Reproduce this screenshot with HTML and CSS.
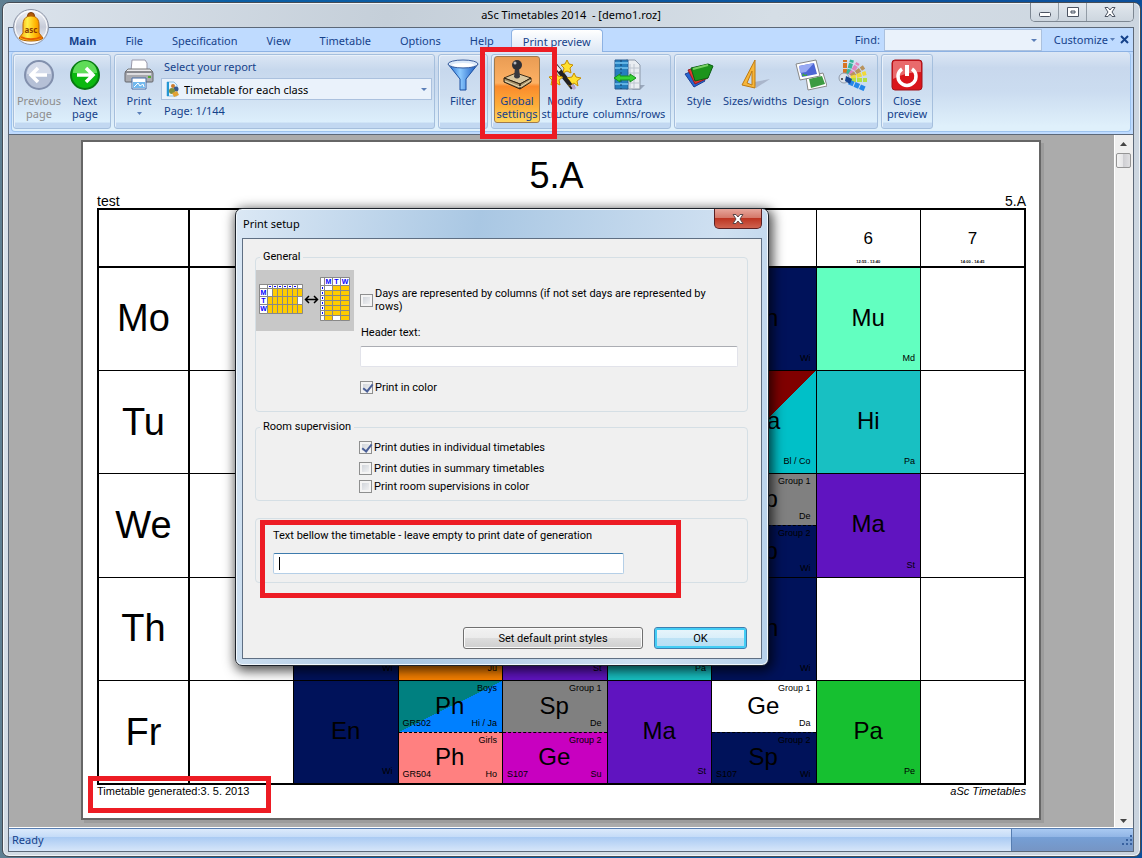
FILE: index.html
```html
<!DOCTYPE html>
<html lang="en">
<head>
    <meta charset="UTF-8">
    <meta name="viewport" content="width=device-width, initial-scale=1.0">
    <title>aSc Timetables 2014 - [demo1.roz]</title>
    <link rel="stylesheet" href="styles.css">
</head>
<body>

<div class="window">
    <header class="titlebar">
        <h1>aSc Timetables 2014&nbsp; - [demo1.roz]</h1>
        <div class="window-buttons">
            <button aria-label="Minimize"><svg width="14" height="12"><rect x="1.500" y="6.500" width="11" height="4" rx="1" fill="#fff" stroke="#4c5462"/></svg></button>
            <button aria-label="Maximize"><svg width="14" height="12"><path d="M1.500 1.500h11v9h-11zM5 5v2h4V5z" fill="#fff" stroke="#4c5462" fill-rule="evenodd"/></svg></button>
            <button class="wide" aria-label="Close"><svg width="14" height="12"><path d="M2 1.500h3l2 2.500 2-2.500h3L9 6l3 4.500H9L7 8l-2 2.500H2L5 6z" fill="#fff" stroke="#4c5462"/></svg></button>
        </div>
    </header>

    <button class="orb" aria-label="Application menu">
        <svg width="38" height="38" viewBox="0 0 38 38">
            <defs>
                <linearGradient id="orbFill" x2="0" y2="1"><stop offset="0" stop-color="#f4f6fa"/><stop offset=".5" stop-color="#c6cbd8"/><stop offset="1" stop-color="#f8f9fc"/></linearGradient>
                <linearGradient id="bell"><stop offset="0" stop-color="#f79a00"/><stop offset=".35" stop-color="#fff04a"/><stop offset=".7" stop-color="#ffb300"/><stop offset="1" stop-color="#e86b00"/></linearGradient>
            </defs>
            <circle cx="19" cy="19" r="17.500" fill="url(#orbFill)" stroke="#8b93a5"/>
            <circle cx="19" cy="19" r="16" fill="none" stroke="#fff"/>
            <circle cx="19" cy="8" r="3.500" fill="#b45a08" stroke="#7b3a04"/>
            <path d="M19 8c-6 0-8 4-8 9v8l-4 5c2 4 22 4 24 0l-4-5v-8c0-5-2-9-8-9z" fill="url(#bell)" stroke="#b86300"/>
            <path d="M9 29c5 3 15 3 20 0" fill="none" stroke="#e45d00" stroke-width="2"/>
            <text x="19" y="25" class="bell-text">asc</text>
        </svg>
    </button>

    <div class="client">
        <nav class="tabs">
            <a href="#" class="main">Main</a>
            <a href="#">File</a>
            <a href="#">Specification</a>
            <a href="#">View</a>
            <a href="#">Timetable</a>
            <a href="#">Options</a>
            <a href="#">Help</a>
            <a href="#" class="active">Print preview</a>
            <div class="find">
                <label for="find">Find:</label>
                <span class="combo"><select id="find"><option></option></select></span>
                <button class="customize">Customize <svg width="5" height="4"><path d="M0 0h5L2.500 3z" fill="#5b7fb8"/></svg></button>
                <button class="close-doc" aria-label="Close"><svg width="9" height="9"><path d="M1 1l7 7M8 1L1 8" stroke="#15428b" stroke-width="2"/></svg></button>
            </div>
        </nav>

        <div class="ribbon">
            <div class="group">
                <button class="tool" disabled>
                    <svg width="32" height="32" viewBox="0 0 32 32"><circle cx="16" cy="16" r="14" fill="#b5c0d6" stroke="#8290ad" stroke-width="2"/><path d="M4 15a12 12 0 0 1 24 0z" fill="#d4dbea"/><path d="M24 16H9M15 9l-7 7 7 7" fill="none" stroke="#fff" stroke-width="3.500"/></svg>
                    <span>Previous<br>page</span>
                </button>
                <button class="tool">
                    <svg width="32" height="32" viewBox="0 0 32 32"><circle cx="16" cy="16" r="14" fill="#0bb80f" stroke="#087a12" stroke-width="2"/><path d="M4 14a12 12 0 0 1 24 0z" fill="#5fdc58"/><path d="M8 16h15M17 9l7 7-7 7" fill="none" stroke="#fff" stroke-width="3.500"/></svg>
                    <span>Next<br>page</span>
                </button>
            </div>

            <div class="group report-group">
                <button class="tool narrow">
                    <svg width="32" height="32" viewBox="0 0 32 32"><path d="M9 1h13l2 3v8H8z" fill="#fff" stroke="#99a"/><path d="M5 10h22l3 3H2z" fill="#e9e9ec" stroke="#777"/><rect x="2" y="13" width="28" height="10" rx="1" fill="#aaabb0" stroke="#65666c"/><path d="M4 15h24" stroke="#dddde0" stroke-width="2"/><rect x="25" y="17" width="3" height="2" fill="#5a3"/><path d="M9 19h14v11H9z" fill="#fff" stroke="#456da8"/><path d="M10 23h12v6H10z" fill="#72b9ee"/><path d="M11 28l4-4 2 3 3-2 1 3" fill="none" stroke="#fff"/></svg>
                    <span>Print</span>
                    <svg width="5" height="4"><path d="M0 0h5L2.500 3z" fill="#5b7fb8"/></svg>
                </button>
                <div class="report">
                    <label for="report">Select your report</label>
                    <span class="combo">
                        <svg width="14" height="16" viewBox="0 0 14 16"><path d="M1 1h7l3 3v11H1z" fill="#e8f4fc" stroke="#8ac0e4"/><path d="M2 1v14" stroke="#2497d4" stroke-width="2"/><circle cx="7" cy="5" r="2" fill="#cc7b2b"/><circle cx="10" cy="8" r="2.500" fill="#38598e"/><circle cx="6" cy="10" r="3" fill="#7c8f3e"/><path d="M6 12l5-2 2 4-5 2z" fill="#e2a233"/></svg>
                        <select id="report"><option>Timetable for each class</option></select>
                    </span>
                    <span>Page: 1/144</span>
                </div>
            </div>

            <div class="group">
                <button class="tool narrow">
                    <svg width="32" height="32" viewBox="0 0 32 32"><defs><linearGradient id="funnel"><stop offset="0" stop-color="#1b66cf"/><stop offset=".4" stop-color="#8ccaff"/><stop offset="1" stop-color="#1152bd"/></linearGradient></defs><path d="M1 5l12 15v11h6V20L31 5z" fill="url(#funnel)" stroke="#1a4fa0"/><ellipse cx="16" cy="5" rx="15" ry="4" fill="#dceafa" stroke="#3a5d9c"/><ellipse cx="16" cy="6" rx="11" ry="2" fill="#fff"/></svg>
                    <span>Filter</span>
                </button>
            </div>

            <div class="group">
                <div class="marked">
                    <button class="tool selected">
                        <svg width="32" height="32" viewBox="0 0 32 32"><path d="M3 19l12-5 15 5-11 6z" fill="#d9c7a0" stroke="#3a2c18"/><path d="M3 19v4l16 7v-5zM30 19v4l-11 7v-5z" fill="#a9946a" stroke="#2c2112"/><path d="M4 22l15 6 11-7" fill="none" stroke="#e9dbb8"/><path d="M14 9h4l1 9c-2 2-4 2-6 0z" fill="#39393f"/><circle cx="16" cy="6" r="5" fill="#2f3036"/><circle cx="14" cy="4" r="1.500" fill="#b7b7bd"/></svg>
                        <span>Global<br>settings</span>
                    </button>
                </div>
                <button class="tool modify">
                    <svg width="32" height="32" viewBox="0 0 32 32"><path d="M5 5l19 24" stroke="#222" stroke-width="5"/><path d="M5 5l6 7" stroke="#eee" stroke-width="3"/><path d="M22 25l4 5" stroke="#b9a5d4" stroke-width="3"/><g fill="#ffe02e" stroke="#c58d00"><path d="M18 1l2 4 4 1-3 3 1 5-4-2-4 2 1-5-3-3 4-1z"/><path d="M7 13l2 4 5 1-4 3 1 5-4-2-5 2 1-5-3-3 5-1z"/><path d="M25 14l2 4 5 1-4 3 1 5-4-3-5 3 1-5-4-3 6-1z"/></g><path d="M11 12l11 14" stroke="#222" stroke-width="3"/></svg>
                    <span>Modify<br>structure</span>
                </button>
                <button class="tool extra">
                    <svg width="32" height="32" viewBox="0 0 32 32"><path d="M22 26h10l-5 5h-8z" fill="#9aa8bc"/><path d="M13 1h9l5 5v24H13z" fill="#e9edf2" stroke="#8c98a8"/><path d="M17 5v24M21 5v24M13 9h13M13 14h13M13 24h13" stroke="#bcc4cf"/><path d="M2 1h13v29H2z" fill="#257fbe" stroke="#285d91"/><path d="M2 4h13M2 9h13M2 25h13" stroke="#63b3e3" stroke-width="2"/><path d="M8 1v29" stroke="#123f68" stroke-dasharray="2 2"/><path d="M1 19l6-4v2h10v-2l6 4-6 4v-2H7v2z" fill="#38d234" stroke="#148f1d"/></svg>
                    <span>Extra<br>columns/rows</span>
                </button>
            </div>

            <div class="group">
                <button class="tool narrow">
                    <svg width="32" height="32" viewBox="0 0 32 32"><path d="M2 15l13-5 7 12-11 6z" fill="#2465d2" stroke="#1c3f94"/><path d="M5 11l13-4 7 12-13 6z" fill="#e53532" stroke="#971c21"/><path d="M8 9l17-4 5 2-5 12-13 3z" fill="#1c941b" stroke="#0b5e15"/><path d="M10 10l15-4" stroke="#75cf62" stroke-width="2"/></svg>
                    <span>Style</span>
                </button>
                <button class="tool sizes">
                    <svg width="32" height="32" viewBox="0 0 32 32"><path d="M15 23l16-3-14 9z" fill="#aab6cb"/><path d="M16 1v28L3 26zM13 12L8 24l5 2z" fill="#f7b63a" stroke="#bd7a12" fill-rule="evenodd"/></svg>
                    <span>Sizes/widths</span>
                </button>
                <button class="tool narrow">
                    <svg width="32" height="32" viewBox="0 0 32 32"><path d="M11 18l17-4 4 13-19 4z" fill="#fff" stroke="#888"/><path d="M14 20l13-3 3 8-14 4z" fill="#3c9b42"/><path d="M1 5l20-4 4 16-20 4z" fill="#fff" stroke="#888"/><path d="M4 7l15-3 3 11-15 3z" fill="#4d66d5"/><path d="M4 7l15-3-8 9-6 1z" fill="#98a9f3"/><path d="M7 17l1-3 2 2 2-1v2z" fill="#3da544"/></svg>
                    <span>Design</span>
                </button>
                <button class="tool colors">
                    <svg width="32" height="32" viewBox="0 0 32 32"><g transform="translate(8 20)" fill="none" stroke-width="4" stroke-dasharray="5 1"><path d="M-1-5V-19" stroke="#d77425"/><path d="M2-5l4-14" stroke="#35b59c"/><path d="M4-4l8-12" stroke="#df85bd"/><path d="M5-3l13-9" stroke="#b8935d"/><path d="M5-1l15-5" stroke="#f2d938"/><path d="M5 1h16" stroke="#b4df45"/><path d="M3 3l16 7" stroke="#2487e8" stroke-width="5"/></g><circle cx="6" cy="19" r="5" fill="#dce3ec" stroke="#919cad"/><circle cx="4" cy="20" r="1" fill="#333"/><path d="M8 17l6 3-2 5-5-3z" fill="#164593"/></svg>
                    <span>Colors</span>
                </button>
            </div>

            <div class="group">
                <button class="tool">
                    <svg width="32" height="32" viewBox="0 0 32 32"><rect x="1" y="1" width="30" height="30" rx="3" fill="#d9151b" stroke="#a11218"/><path d="M2 4q0-2 2-2h24q2 0 2 2v9q-15 0-28 7z" fill="#e96a6c"/><path d="M11 10a9 9 0 1 0 10 0" fill="none" stroke="#fff" stroke-width="3.500"/><path d="M16 6v11" stroke="#fff" stroke-width="4"/></svg>
                    <span>Close<br>preview</span>
                </button>
            </div>
        </div>

        <main class="workspace">
            <div class="preview">
                <section class="page">
                    <div class="page-head">
                        <span>test</span>
                        <h2>5.A</h2>
                        <span>5.A</span>
                    </div>
                    <table class="timetable">
                        <thead>
                            <tr>
                                <td></td>
                                <th></th>
                                <th></th>
                                <th></th>
                                <th></th>
                                <th></th>
                                <th></th>
                                <th>6<small>12:55 - 13:40</small></th>
                                <th>7<small>14:00 - 14:45</small></th>
                            </tr>
                        </thead>
                        <tbody>
                            <tr>
                                <th>Mo</th>
                                <td></td><td></td><td></td><td></td><td></td>
                                <td><div class="lesson navy"><b>En</b><i>Wi</i></div></td>
                                <td><div class="lesson mint"><b>Mu</b><i>Md</i></div></td>
                                <td></td>
                            </tr>
                            <tr>
                                <th>Tu</th>
                                <td></td><td></td><td></td><td></td><td></td>
                                <td><div class="lesson red-cyan"><b>Ma</b><i>Bl / Co</i></div></td>
                                <td><div class="lesson teal"><b>Hi</b><i>Pa</i></div></td>
                                <td></td>
                            </tr>
                            <tr>
                                <th>We</th>
                                <td></td><td></td><td></td><td></td><td></td>
                                <td>
                                    <div class="split">
                                        <div class="lesson gray"><em>Group 1</em><b>Sp</b><i>De</i></div>
                                        <div class="lesson navy"><em>Group 2</em><b>Sp</b><i>Wi</i></div>
                                    </div>
                                </td>
                                <td><div class="lesson purple"><b>Ma</b><i>St</i></div></td>
                                <td></td>
                            </tr>
                            <tr>
                                <th>Th</th>
                                <td></td>
                                <td><div class="lesson navy"><i>Wi</i></div></td>
                                <td><div class="lesson orange"><i>Ju</i></div></td>
                                <td><div class="lesson purple"><i>St</i></div></td>
                                <td><div class="lesson teal"><i>Pa</i></div></td>
                                <td><div class="lesson navy"><b>En</b><i>Wi</i></div></td>
                                <td></td>
                                <td></td>
                            </tr>
                            <tr>
                                <th>Fr</th>
                                <td></td>
                                <td><div class="lesson navy"><b>En</b><i>Wi</i></div></td>
                                <td>
                                    <div class="split">
                                        <div class="lesson teal-blue"><em>Boys</em><b>Ph</b><u>GR502</u><i>Hi / Ja</i></div>
                                        <div class="lesson salmon"><em>Girls</em><b>Ph</b><u>GR504</u><i>Ho</i></div>
                                    </div>
                                </td>
                                <td>
                                    <div class="split">
                                        <div class="lesson gray"><em>Group 1</em><b>Sp</b><i>De</i></div>
                                        <div class="lesson magenta"><em>Group 2</em><b>Ge</b><u>S107</u><i>Su</i></div>
                                    </div>
                                </td>
                                <td><div class="lesson purple"><b>Ma</b><i>St</i></div></td>
                                <td>
                                    <div class="split">
                                        <div class="lesson"><em>Group 1</em><b>Ge</b><i>Da</i></div>
                                        <div class="lesson navy"><em>Group 2</em><b>Sp</b><u>S107</u><i>Wi</i></div>
                                    </div>
                                </td>
                                <td><div class="lesson green"><b>Pa</b><i>Pe</i></div></td>
                                <td></td>
                            </tr>
                        </tbody>
                    </table>
                    <div class="page-foot">
                        <span class="generated">Timetable generated:3. 5. 2013</span>
                        <cite>aSc Timetables</cite>
                    </div>
                </section>
            </div>
            <div class="scrollbar">
                <svg width="7" height="4"><path d="M0 4l3.500-4L7 4z" fill="#444"/></svg>
                <div class="thumb"></div>
                <svg width="7" height="4"><path d="M0 0h7L3.500 4z" fill="#444"/></svg>
            </div>
        </main>

        <footer class="status">
            <span>Ready</span>
            <div class="grip"><svg width="11" height="11"><path d="M8 0h2v2H8zM4 4h2v2H4zM8 4h2v2H8zM0 8h2v2H0zM4 8h2v2H4zM8 8h2v2H8z" fill="#38619f"/></svg></div>
        </footer>
    </div>
</div>

<!-- Print setup dialog -->
<form class="dialog" role="dialog" aria-labelledby="dialogTitle">
    <div class="dialog-title">
        <h3 id="dialogTitle">Print setup</h3>
        <button type="button" aria-label="Close"><svg width="14" height="12"><path d="M2 1.500h3l2 2.500 2-2.500h3L9 6l3 4.500H9L7 8l-2 2.500H2L5 6z" fill="#fff" stroke="#5c4648"/></svg></button>
    </div>
    <div class="dialog-body">
        <fieldset class="general">
            <legend>General</legend>
            <svg class="layout-pic" width="98" height="61" viewBox="0 0 98 61">
                <rect width="98" height="61" fill="#c8c8c8"/>
                <g stroke="#888" stroke-width="1">
                    <path d="M3.500 14.500h43v29h-43z" fill="#fc0"/>
                    <path d="M3.500 14.500h43v4h-43zM3.500 18.500h8v25h-8zM11.500 18.500h5v8h-5zM41.500 26.500h5v8h-5z" fill="#fff"/>
                    <path d="M11.500 14v29M16.500 14v29M21.500 14v29M26.500 14v29M31.500 14v29M36.500 14v29M41.500 14v29M3 26.500h43M3 34.500h43" fill="none"/>
                    <path d="M64.500 7.500h29v43h-29z" fill="#fc0"/>
                    <path d="M64.500 7.500h29v8h-29zM64.500 15.500h4v35h-4zM68.500 15.500h8v5h-8zM76.500 45.500h8v5h-8z" fill="#fff"/>
                    <path d="M68.500 7v43M76.500 7v43M84.500 7v43M64 20.500h29M64 25.500h29M64 30.500h29M64 35.500h29M64 40.500h29M64 45.500h29" fill="none"/>
                </g>
                <path d="M13 16.500h2M18 16.500h2M23 16.500h2M28 16.500h2M33 16.500h2M38 16.500h2M66.500 17v2M66.500 22v2M66.500 27v2M66.500 32v2M66.500 37v2M66.500 42v2" stroke="#00f" stroke-width="1"/>
                <path d="M50 29.500h11M53 26l-3.500 3.500L53 33M58 26l3.500 3.500L58 33" fill="none" stroke="#000" stroke-width="1.500"/>
                <g class="pic-text"><text x="7.500" y="25">M</text><text x="7.500" y="33">T</text><text x="7.500" y="41">W</text><text x="72.500" y="14">M</text><text x="80.500" y="14">T</text><text x="89" y="14">W</text></g>
            </svg>
            <div class="general-fields">
                <label class="check"><input type="checkbox"><span>Days are represented by columns (if not set days are represented by rows)</span></label>
                <label class="field-label" for="headerText">Header text:</label>
                <input class="text" type="text" id="headerText">
                <label class="check"><input type="checkbox" checked><span>Print in color</span></label>
            </div>
        </fieldset>

        <fieldset class="rooms">
            <legend>Room supervision</legend>
            <label class="check first"><input type="checkbox" checked><span>Print duties in individual timetables</span></label>
            <label class="check"><input type="checkbox"><span>Print duties in summary timetables</span></label>
            <label class="check"><input type="checkbox"><span>Print room supervisions in color</span></label>
        </fieldset>

        <div class="below">
            <label for="belowText">Text bellow the timetable - leave empty to print date of generation</label>
            <div class="below-input">
                <input class="text focused" type="text" id="belowText">
                <span class="caret"></span>
            </div>
        </div>

        <div class="dialog-buttons">
            <button type="button">Set default print styles</button>
            <button type="button" class="ok">OK</button>
        </div>
    </div>
</form>

</body>
</html>
```
FILE: styles.css
```css
* {
    box-sizing: border-box;
}

body {
    margin: 0;
    height: 100vh;
    padding: 2px 1px 1px 2px;
    background: linear-gradient(90deg, #5f7f92, #0b5fa5 20%, #0b4f9b);
    font-family: "Noto Sans", "Open Sans", sans-serif;
    font-size: 11px;
    color: #15428b;
    position: relative;
    overflow: hidden;
}

h1, h2, h3 {
    margin: 0;
    font-weight: normal;
}

button, select, input {
    font: inherit;
    color: inherit;
    margin: 0;
}

svg {
    display: block;
    flex: none;
}

.window {
    position: relative;
    height: 100%;
    display: flex;
    flex-direction: column;
    border: 1px solid #454c55;
    border-radius: 7px;
    padding: 0 6px 4px 5px;
    background: linear-gradient(100deg, #dbe3ec, #c5cfd9 30%, #d5dee6 60%, #c9d3de);
    box-shadow: inset 0 0 0 1px #f1f5f8;
}

/* Title bar */
.titlebar {
    display: flex;
    align-items: flex-start;
    height: 24px;
}

.titlebar h1 {
    flex: 1;
    padding-left: 104px;
    text-align: center;
    font-size: 11px;
    line-height: 24px;
    color: #000;
}

.window-buttons {
    display: flex;
    border: 1px solid #7d8792;
    border-top: 0;
    border-radius: 0 0 5px 5px;
}

.window-buttons button {
    width: 28px;
    height: 18px;
    padding: 0;
    border: 0;
    border-right: 1px solid #929ca6;
    background: linear-gradient(#e2e8ee, #cdd6df);
    display: flex;
    align-items: center;
    justify-content: center;
}

.window-buttons .wide {
    width: 46px;
    border-right: 0;
}

.window-buttons button:last-child,
.window-buttons button:first-child {
    border-radius: 0 0 4px 4px;
}

.orb {
    position: absolute;
    left: 9px;
    top: 5px;
    padding: 0;
    border: 0;
    background: none;
}

.bell-text {
    font-size: 8px;
    font-weight: bold;
    text-anchor: middle;
    fill: #8d3a00;
}

.client {
    flex: 1;
    min-height: 0;
    display: flex;
    flex-direction: column;
    border: 1px solid #5c6878;
    background: #bfdbff;
}

/* Tabs */
.tabs {
    display: flex;
    gap: 1px;
    height: 24px;
    padding-left: 46px;
    border-bottom: 1px solid #8db2e3;
}

.tabs a {
    padding: 0 14px;
    line-height: 26px;
    color: #15428b;
    text-decoration: none;
}

.tabs .main {
    font-weight: bold;
}

.tabs .active {
    margin: 1px 0 -1px 2px;
    padding: 0 11px;
    line-height: 23px;
    border: 1px solid #8db2e3;
    border-bottom: 0;
    border-radius: 4px 4px 0 0;
    background: linear-gradient(#fff, #dce7f5);
}

.find {
    margin-left: auto;
    display: flex;
    align-items: center;
    line-height: 22px;
}

.combo {
    position: relative;
    display: flex;
    align-items: center;
    height: 22px;
    border: 1px solid #abc1de;
    background: #eaf2fb;
}

.combo::after {
    content: "";
    position: absolute;
    right: 4px;
    top: 9px;
    border: 3px solid transparent;
    border-top-color: #5b7fb8;
    border-bottom: 0;
}

.combo select {
    flex: 1;
    height: 20px;
    padding: 0 4px;
    border: 0;
    appearance: none;
    background: none;
    color: #000;
}

.find .combo {
    width: 158px;
    margin: 0 12px 0 4px;
}

.customize,
.close-doc {
    display: flex;
    align-items: center;
    gap: 2px;
    padding: 0;
    border: 0;
    background: none;
}

.close-doc {
    margin: 0 4px 0 5px;
}

/* Ribbon */
.ribbon {
    display: flex;
    gap: 3px;
    height: 80px;
    margin: 0 2px 2px;
    padding: 2px 1px;
    border: 1px solid #9dc3ee;
    border-top: 0;
    border-radius: 4px;
    background: linear-gradient(#dce7f5, #c8d8ed 20%, #cbdcf0 50%, #dff0fb 94%);
}

.group {
    display: flex;
    padding: 1px 2px;
    border: 1px solid #a5bfdd;
    border-radius: 3px;
    background: linear-gradient(#dbe6f4, #c7d8ed 20%, #cfdff1 55%, #dceffc 92%, #c2d8f1 93%, #c2d8f1);
    box-shadow: inset 1px 1px 0 #e9f1fa;
}

.tool {
    display: flex;
    flex-direction: column;
    align-items: center;
    width: 46px;
    height: 69px;
    padding: 3px 0 0;
    border: 0;
    background: none;
    line-height: 13px;
    white-space: nowrap;
}

.tool span {
    margin-top: 3px;
}

.tool span + svg {
    margin-top: 5px;
}

.tool.narrow {
    width: 44px;
}

.tool.modify {
    width: 50px;
}

.tool.extra {
    width: 78px;
}

.tool.sizes {
    width: 68px;
}

.tool.colors {
    width: 42px;
}

.tool:disabled {
    color: #8d8d8d;
}

.tool.selected {
    height: 67px;
    padding-top: 2px;
    border: 1px solid #a17a4c;
    border-radius: 3px;
    background: linear-gradient(#e99c54, #fdb164 40%, #fa8a2c 45%, #fdae3a 75%, #ffd65a);
}

/* red frame around the button */
.marked {
    position: relative;
}

.marked::after {
    content: "";
    position: absolute;
    inset: -9px -17px -12px -14px;
    border: 5px solid #ed1c24;
    z-index: 1;
}

.report-group {
    width: 321px;
}

.report {
    flex: 1;
    display: flex;
    flex-direction: column;
    line-height: 22px;
}

.report > label,
.report > span:last-child {
    padding-left: 3px;
}

.report .combo {
    padding-left: 4px;
}

/* Print preview */
.workspace {
    flex: 1;
    min-height: 0;
    display: flex;
    border-top: 1px solid #5c6878;
    background: #ababab;
}

.preview {
    flex: 1;
    overflow: hidden;
    padding: 5px 73px 8px 72px;
}

.page {
    height: 100%;
    border: 2px solid #666;
    padding: 0 13px 0 14px;
    background: #fff;
    box-shadow: 3px 3px 0 #9c9c9c;
    font-family: "Liberation Sans", Arial, sans-serif;
    color: #000;
}

.page-head {
    display: grid;
    grid-template-columns: 1fr auto 1fr;
    align-items: end;
    height: 66px;
    font-size: 14px;
    line-height: 14px;
}

.page-head h2 {
    padding: 0 10px 9px 0;
    font-size: 36px;
    line-height: 46px;
}

.page-head span:last-child {
    text-align: right;
}

.timetable {
    width: 100%;
    height: 577px;
    table-layout: fixed;
    border-collapse: collapse;
    border: 2px solid #000;
}

.timetable td,
.timetable th {
    padding: 0;
    border: 1px solid #000;
    font-weight: normal;
}

.timetable tr > :first-child {
    width: 91px;
    border-right: 2px solid #000;
}

.timetable thead tr > * {
    height: 58px;
    border-bottom: 2px solid #000;
    font-size: 17px;
    line-height: 20px;
    vertical-align: bottom;
}

.timetable small {
    display: block;
    margin-top: 9px;
    font-size: 4px;
    font-weight: bold;
    line-height: 8px;
}

.timetable tbody tr > * {
    height: 103px;
}

.timetable tbody th {
    font-size: 38px;
}

/* Lessons: subject in the middle, group, room and teacher in the corners */
.lesson {
    display: grid;
    height: 100%;
    padding: 4px 5px 6px;
    font-size: 9px;
    line-height: 12px;
}

.lesson > * {
    grid-area: 1 / 1;
    font-style: normal;
    font-weight: normal;
    text-decoration: none;
}

.lesson b {
    place-self: center;
    font-size: 24px;
    line-height: 28px;
}

.lesson em {
    place-self: start end;
}

.lesson i {
    place-self: end;
}

.lesson u {
    place-self: end start;
}

.split {
    display: grid;
    grid-template-rows: 1fr 1fr;
    height: 100%;
}

.split .lesson {
    padding: 1px 5px 3px 4px;
}

.split .lesson + .lesson {
    border-top: 1px dashed #000;
}

.navy { background: #00125a; }
.mint { background: #62ffc0; }
.teal { background: #18c0c2; }
.gray { background: #808080; }
.purple { background: #6014c0; }
.orange { background: #f78000; }
.salmon { background: #ff8080; }
.magenta { background: #c800c0; }
.green { background: #16c030; }
.red-cyan { background: linear-gradient(to bottom right, #800000 50%, #00c0c8 50%); }
.teal-blue { background: linear-gradient(to bottom right, #008080 50%, #0080ff 50%); }

.page-foot {
    display: flex;
    justify-content: space-between;
    font-size: 11px;
    line-height: 13px;
}

.generated {
    position: relative;
}

.generated::after {
    content: "";
    position: absolute;
    inset: -9px -22px -15px -9px;
    border: 5px solid #ed1c24;
}

.scrollbar {
    width: 19px;
    padding: 7px 2px 5px 1px;
    display: flex;
    flex-direction: column;
    align-items: center;
    background: #efefef;
    border-left: 1px solid #fff;
}

.scrollbar .thumb {
    width: 15px;
    height: 15px;
    margin: 7px 0 auto;
    border: 1px solid #959595;
    border-radius: 2px;
    background: linear-gradient(90deg, #f4f4f4, #e4e4e6 50%, #cfcfd3 50%, #e0e0e2);
}

.status {
    display: flex;
    height: 23px;
    border-top: 1px solid #567db1;
    background: linear-gradient(#dceafb, #c5dcf8 35%, #a9caf3 36%, #d7e6f9);
    line-height: 22px;
    box-shadow: 0 -1px 0 #fff;
}

.status span {
    flex: 1;
    padding-left: 3px;
}

.grip {
    display: flex;
    align-items: center;
    justify-content: flex-end;
    width: 122px;
    border-left: 1px solid #567db1;
    background: linear-gradient(#a9c9f2, #92b6e6 35%, #759fd6 36%, #7695c4);
}

/* Dialog */
.dialog {
    position: absolute;
    left: 235px;
    top: 208px;
    width: 534px;
    padding: 0 6px 6px;
    border: 1px solid #1d232b;
    border-radius: 7px;
    background: linear-gradient(100deg, #dbe8f5, #a9c7e3 40%, #cfe0f1 80%, #b5d0ea);
    box-shadow: inset 0 0 0 1px #f2f8fd, 2px 3px 12px 2px rgba(0, 0, 0, 0.7);
    font-family: Roboto, "Liberation Sans", sans-serif;
    line-height: 13px;
    color: #000;
}

.dialog-title {
    display: flex;
    justify-content: space-between;
    height: 29px;
}

.dialog-title h3 {
    font-family: "Noto Sans", "Open Sans", sans-serif;
    font-size: 11px;
    line-height: 30px;
    padding-left: 1px;
}

.dialog-title button {
    display: flex;
    align-items: center;
    justify-content: center;
    width: 48px;
    height: 20px;
    padding: 0;
    border: 1px solid #5a2023;
    border-top: 0;
    border-radius: 0 0 5px 5px;
    background: linear-gradient(#e7a69b, #d57a6b 45%, #bd3522 50%, #cf6350);
}

.dialog-body {
    padding: 11px 13px 9px 12px;
    border: 1px solid #5f6f83;
    background: #f0f0f0;
}

fieldset {
    margin: 0;
    border: 1px solid #d5dfe5;
    border-radius: 4px;
}

legend {
    margin-left: 4px;
    padding: 0 3px;
    line-height: 14px;
}

.general {
    display: flex;
    gap: 6px;
    padding: 6px 9px 17px 0;
    margin-bottom: 8px;
}

.layout-pic {
    display: block;
}

.pic-text {
    font-family: "Liberation Sans", Arial, sans-serif;
    font-size: 7px;
    font-weight: bold;
    text-anchor: middle;
    fill: #00f;
}

.general-fields {
    flex: 1;
    display: flex;
    flex-direction: column;
    padding-top: 17px;
}

.check {
    display: flex;
    align-items: center;
    gap: 2px;
}

.check input {
    flex: none;
    width: 13px;
    height: 13px;
    appearance: none;
    border: 1px solid #8e8f8f;
    background: linear-gradient(135deg, #c9ced5, #f8f8f8);
    box-shadow: inset 0 0 0 2px #f4f4f4;
}

.check input:checked::after {
    content: "";
    display: block;
    width: 4px;
    height: 8px;
    margin: 0 0 0 4px;
    border: solid #4a5f97;
    border-width: 0 2px 2px 0;
    transform: rotate(38deg);
}

.check span {
    max-width: 350px;
}

.field-label {
    margin: 13px 0 7px 1px;
}

.text {
    width: 100%;
    height: 21px;
    padding: 0 4px;
    border: 1px solid #e2e3ea;
    border-top-color: #abadb3;
    border-radius: 2px;
    background: #fff;
    outline: none;
}

.text + .check {
    margin-top: 14px;
}

.rooms {
    display: flex;
    flex-direction: column;
    gap: 5px;
    padding: 7px 0;
    margin-bottom: 17px;
}

.rooms .check {
    margin-left: 103px;
}

.rooms .first {
    margin-bottom: 3px;
}

.below {
    position: relative;
    padding: 10px 17px 8px;
    border: 1px solid #d5dfe5;
    border-radius: 4px;
}

.below label {
    display: block;
    margin-bottom: 11px;
}

.below::after {
    content: "";
    position: absolute;
    inset: 1px 66px -16px 4px;
    border: 5px solid #ed1c24;
}

.below-input {
    position: relative;
    width: 351px;
}

.text.focused {
    border-color: #b5cfe7;
    border-top-color: #3d7bad;
}

.caret {
    position: absolute;
    left: 6px;
    top: 4px;
    width: 1px;
    height: 13px;
    background: #000;
}

.dialog-buttons {
    display: flex;
    justify-content: flex-end;
    gap: 11px;
    margin-top: 44px;
    padding-right: 1px;
}

.dialog-buttons button {
    width: 180px;
    height: 22px;
    padding: 0;
    border: 1px solid #707070;
    border-radius: 3px;
    background: linear-gradient(#f2f2f2, #ebebeb 50%, #ddd 50%, #cfcfcf);
    box-shadow: inset 0 0 0 1px #fbfbfb;
}

.dialog-buttons .ok {
    width: 93px;
    border-color: #3c7fb1;
    background: linear-gradient(#e9f5fb, #d9effa 50%, #bee3f5 50%, #b5def4);
    box-shadow: inset 0 0 0 2px #43cdf5;
}
```
